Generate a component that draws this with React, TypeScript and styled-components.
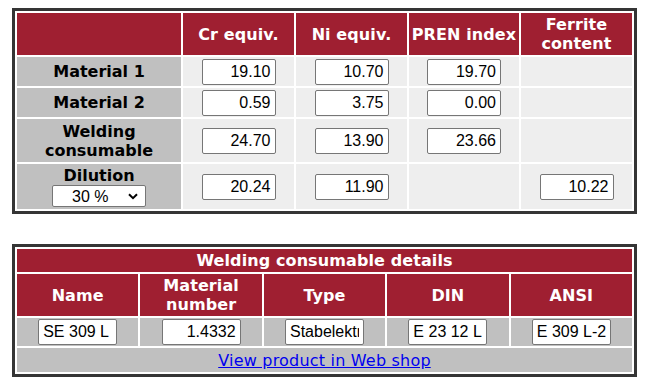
import React from "react";
import styled, { createGlobalStyle } from "styled-components";

const GlobalStyle = createGlobalStyle`
  html, body { margin: 0; padding: 0; background: #fff; }
  body { font-family: "DejaVu Sans", Verdana, sans-serif; }
`;

const RED = "#9f1f31";

const Page = styled.div`
  padding: 8px 0 0 12px;
  display: flex;
  flex-direction: column;
  gap: 30px;
`;

const DataTable = styled.table`
  width: 625px;
  table-layout: fixed;
  border-collapse: separate;
  border-spacing: 2px;
  border: 3px solid #353535;
  background: #fff;
  font-family: "DejaVu Sans", Verdana, sans-serif;
  font-size: 16px;
`;

const Col = styled.col<{ $w: number }>`
  width: ${(p) => p.$w}px;
`;

const HeadCell = styled.th<{ $h?: number }>`
  background: ${RED};
  color: #fff;
  font-weight: bold;
  font-size: 16px;
  line-height: 19px;
  letter-spacing: 0.1px;
  text-align: center;
  vertical-align: middle;
  padding: 2px 1px;
  height: ${(p) => p.$h ?? 42}px;
  box-sizing: border-box;
`;

const LabelCell = styled.td<{ $h: number }>`
  background: #c0c0c0;
  color: #000;
  font-weight: bold;
  font-size: 16px;
  line-height: 19px;
  text-align: center;
  vertical-align: middle;
  padding: 1px 2px;
  height: ${(p) => p.$h}px;
  box-sizing: border-box;
`;

const ValueCell = styled.td<{ $tone?: "light" | "mid" }>`
  background: ${(p) => (p.$tone === "mid" ? "#c0c0c0" : "#eeeeee")};
  text-align: center;
  vertical-align: middle;
  padding: 1px 2px;
`;

const LinkCell = styled.td`
  background: #c0c0c0;
  text-align: center;
  vertical-align: middle;
  height: 24px;
  padding: 1px 2px;
  box-sizing: border-box;
  line-height: 19px;
`;

const Field = styled.input<{ $align?: "left" | "right"; $w?: number }>`
  box-sizing: border-box;
  width: ${(p) => p.$w ?? 74}px;
  height: 26px;
  margin: 0;
  padding: 0 4px;
  border: 1px solid #767676;
  border-radius: 2px;
  background: #fff;
  color: #000;
  font-family: "Liberation Sans", Arial, sans-serif;
  font-size: 16px;
  text-align: ${(p) => p.$align ?? "right"};
  vertical-align: middle;
`;

const PickerWrap = styled.span`
  position: relative;
  display: inline-block;
  width: 94px;
  height: 22px;
  vertical-align: top;
`;

const Picker = styled.select`
  box-sizing: border-box;
  appearance: none;
  -webkit-appearance: none;
  width: 94px;
  height: 22px;
  margin: 0;
  padding: 0 0 0 19px;
  border: 1px solid #767676;
  border-radius: 2px;
  background: #fff;
  color: #000;
  font-family: "Liberation Sans", Arial, sans-serif;
  font-size: 16px;
  text-align: left;
  display: block;
`;

const Chevron = styled.svg`
  position: absolute;
  right: 8px;
  top: 8px;
  width: 10px;
  height: 7px;
  pointer-events: none;
`;

const ShopLink = styled.a`
  color: #0000ee;
  text-decoration: underline;
  font-family: "DejaVu Sans", Verdana, sans-serif;
  font-size: 16px;
  letter-spacing: 0.2px;
`;

type Row = { label: React.ReactNode; h: number; cr: string; ni: string; pren?: string; ferrite?: string; dilution?: boolean };

const rows: Row[] = [
  { label: "Material 1", h: 29, cr: "19.10", ni: "10.70", pren: "19.70" },
  { label: "Material 2", h: 29, cr: "0.59", ni: "3.75", pren: "0.00" },
  { label: (<>Welding<br />consumable</>), h: 43, cr: "24.70", ni: "13.90", pren: "23.66" },
  { label: "Dilution", h: 45, cr: "20.24", ni: "11.90", ferrite: "10.22", dilution: true },
];

const details = [
  { head: "Name", value: "SE 309 L", align: "left" as const },
  { head: (<>Material<br />number</>), value: "1.4332", align: "right" as const },
  { head: "Type", value: "Stabelektrode", align: "left" as const },
  { head: "DIN", value: "E 23 12 L", align: "left" as const },
  { head: "ANSI", value: "E 309 L-2", align: "left" as const },
];

export default function App() {
  return (
    <>
      <GlobalStyle />
      <Page>
        <DataTable>
          <colgroup>
            <Col $w={164} />
            <Col $w={111} />
            <Col $w={111} />
            <Col $w={110} />
            <Col $w={111} />
          </colgroup>
          <thead>
            <tr>
              <HeadCell></HeadCell>
              <HeadCell>Cr equiv.</HeadCell>
              <HeadCell>Ni equiv.</HeadCell>
              <HeadCell>PREN index</HeadCell>
              <HeadCell>Ferrite<br />content</HeadCell>
            </tr>
          </thead>
          <tbody>
            {rows.map((r, i) => (
              <tr key={i}>
                <LabelCell $h={r.h}>
                  {r.label}
                  {r.dilution && (
                    <>
                      <br />
                      <PickerWrap>
                        <Picker defaultValue="30">
                          <option value="30">30 %</option>
                        </Picker>
                        <Chevron viewBox="0 0 10 7">
                          <path d="M1 1.2 L5 5.2 L9 1.2" fill="none" stroke="#000" strokeWidth="2" />
                        </Chevron>
                      </PickerWrap>
                    </>
                  )}
                </LabelCell>
                <ValueCell><Field readOnly value={r.cr} /></ValueCell>
                <ValueCell><Field readOnly value={r.ni} /></ValueCell>
                <ValueCell>{r.pren && <Field readOnly value={r.pren} />}</ValueCell>
                <ValueCell>{r.ferrite && <Field readOnly value={r.ferrite} />}</ValueCell>
              </tr>
            ))}
          </tbody>
        </DataTable>

        <DataTable>
          <thead>
            <tr>
              <HeadCell colSpan={5} $h={23}>Welding consumable details</HeadCell>
            </tr>
            <tr>
              {details.map((d, i) => (
                <HeadCell key={i}>{d.head}</HeadCell>
              ))}
            </tr>
          </thead>
          <tbody>
            <tr>
              {details.map((d, i) => (
                <ValueCell key={i} $tone="mid">
                  <Field readOnly value={d.value} $align={d.align} $w={79} />
                </ValueCell>
              ))}
            </tr>
            <tr>
              <LinkCell colSpan={5}>
                <ShopLink href="#">View product in Web shop</ShopLink>
              </LinkCell>
            </tr>
          </tbody>
        </DataTable>
      </Page>
    </>
  );
}
